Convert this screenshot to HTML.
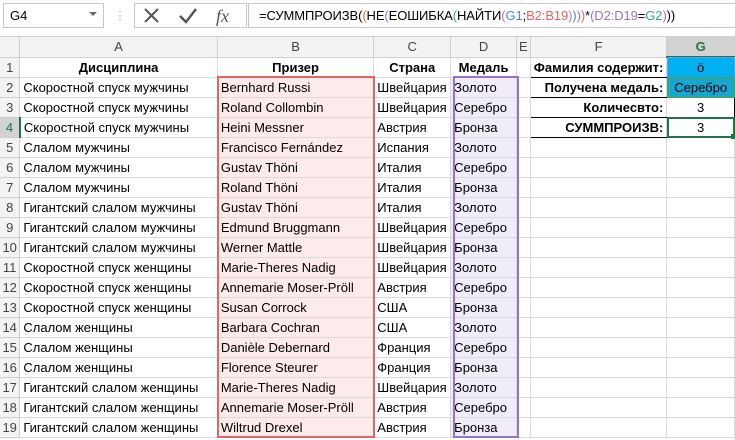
<!DOCTYPE html><html><head><meta charset="utf-8"><style>
body{margin:0;width:735px;height:440px;overflow:hidden;background:#fff;font-family:"Liberation Sans","DejaVu Sans",sans-serif;font-size:13px;color:#000;position:relative}
.a{position:absolute;box-sizing:border-box}
table{position:absolute;left:0;top:37px;border-collapse:collapse;table-layout:fixed}
td{height:20px;padding:0 0 0 3px;border-right:1px solid #d9d9d9;border-bottom:1px solid #d9d9d9;white-space:nowrap;overflow:hidden;box-sizing:border-box;line-height:19px}
tr.h td{background:#f3f3f3;color:#444;text-align:center;padding:0;border-color:#cfcfcf}
td.r{background:#f3f3f3;color:#444;text-align:center;padding:0;border-color:#cfcfcf}
.b{font-weight:bold}.c{text-align:center;padding:0}.rt{text-align:right;padding-right:3px}
.pk{background:#fdeaea}.pu{background:#f1edf8}
</style></head><body>
<div class="a" style="left:0;top:0;width:735px;height:37px;background:#fff;border-bottom:1px solid #d0d0d0"></div>
<div class="a" style="left:3px;top:3px;width:101px;height:25px;border:1px solid #c6c6c6;padding:4px 0 0 6px;font-size:13px">G4<span style="position:absolute;right:6px;top:8px;border-left:4px solid transparent;border-right:4px solid transparent;border-top:4px solid #666"></span></div>
<div class="a" style="left:118px;top:9px;color:#999;font-size:12px;line-height:4px">·<br>·<br>·</div>
<div class="a" style="left:134px;top:3px;width:113px;height:25px;border:1px solid #c6c6c6"></div>
<svg class="a" style="left:134px;top:3px" width="113" height="25"><path d="M11 6 L24 19 M24 6 L11 19" stroke="#555" stroke-width="2"/><path d="M46 13 L52 19 L62 6" stroke="#555" stroke-width="2.5" fill="none"/><text x="82" y="19" font-family="Liberation Serif" font-style="italic" font-size="18" fill="#555">fx</text></svg>
<div class="a" style="left:248px;top:3px;width:487px;height:25px;border:1px solid #c6c6c6;border-right:none;padding:4px 0 0 10px;font-size:13px;letter-spacing:-0.1px">=СУММПРОИЗВ(<span style="color:#e06666">(</span>НЕ<span style="color:#9673c8">(</span>ЕОШИБКА<span style="color:#3aa37a">(</span>НАЙТИ<span style="color:#c070c0">(</span><span style="color:#4a86e8">G1</span>;<span style="color:#e06666">B2:B19</span><span style="color:#c070c0">)</span><span style="color:#3aa37a">)</span><span style="color:#9673c8">)</span><span style="color:#e06666">)</span>*<span style="color:#9673c8">(</span><span style="color:#9673c8">D2:D19</span>=<span style="color:#3aa37a">G2</span><span style="color:#9673c8">)</span>))</div>
<table>
<colgroup><col style="width:20px"><col style="width:198px"><col style="width:157px"><col style="width:77px"><col style="width:66px"><col style="width:14px"><col style="width:135px"><col style="width:68px"></colgroup>
<tr class="h"><td></td><td>A</td><td>B</td><td>C</td><td>D</td><td>E</td><td>F</td><td style="background:#d2d2d2;color:#217346;font-weight:bold;border-bottom:2px solid #217346">G</td></tr>
<tr><td class="r">1</td><td class="b c">Дисциплина</td><td class="b c">Призер</td><td class="b c">Страна</td><td class="b c">Медаль</td><td></td><td class="b rt" style="border-top:1px solid #000;border-left:1px solid #000;border-bottom:1px solid #000">Фамилия содержит:</td><td class="c" style="background:#00b0f0;border:1px solid #000">ö</td></tr>
<tr><td class="r">2</td><td>Скоростной спуск мужчины</td><td class="pk">Bernhard Russi</td><td>Швейцария</td><td class="pu">Золото</td><td></td><td class="b rt" style="border-left:1px solid #000;border-bottom:1px solid #000">Получена медаль:</td><td class="c" style="background:#16a6d4;border:1px solid #000">Серебро</td></tr>
<tr><td class="r">3</td><td>Скоростной спуск мужчины</td><td class="pk">Roland Collombin</td><td>Швейцария</td><td class="pu">Серебро</td><td></td><td class="b rt" style="border-left:1px solid #000;border-bottom:1px solid #000">Количесвто:</td><td class="c" style="border:1px solid #000">3</td></tr>
<tr><td class="r" style="background:#d2d2d2;color:#217346;border-right:2px solid #217346">4</td><td>Скоростной спуск мужчины</td><td class="pk">Heini Messner</td><td>Австрия</td><td class="pu">Бронза</td><td></td><td class="b rt" style="border-bottom:1px solid #000">СУММПРОИЗВ:</td><td class="c" style="border:1px solid #000">3</td></tr>
<tr><td class="r">5</td><td>Слалом мужчины</td><td class="pk">Francisco Fernández</td><td>Испания</td><td class="pu">Золото</td><td></td><td></td><td></td></tr>
<tr><td class="r">6</td><td>Слалом мужчины</td><td class="pk">Gustav Thöni</td><td>Италия</td><td class="pu">Серебро</td><td></td><td></td><td></td></tr>
<tr><td class="r">7</td><td>Слалом мужчины</td><td class="pk">Roland Thöni</td><td>Италия</td><td class="pu">Бронза</td><td></td><td></td><td></td></tr>
<tr><td class="r">8</td><td>Гигантский слалом мужчины</td><td class="pk">Gustav Thöni</td><td>Италия</td><td class="pu">Золото</td><td></td><td></td><td></td></tr>
<tr><td class="r">9</td><td>Гигантский слалом мужчины</td><td class="pk">Edmund Bruggmann</td><td>Швейцария</td><td class="pu">Серебро</td><td></td><td></td><td></td></tr>
<tr><td class="r">10</td><td>Гигантский слалом мужчины</td><td class="pk">Werner Mattle</td><td>Швейцария</td><td class="pu">Бронза</td><td></td><td></td><td></td></tr>
<tr><td class="r">11</td><td>Скоростной спуск женщины</td><td class="pk">Marie-Theres Nadig</td><td>Швейцария</td><td class="pu">Золото</td><td></td><td></td><td></td></tr>
<tr><td class="r">12</td><td>Скоростной спуск женщины</td><td class="pk">Annemarie Moser-Pröll</td><td>Австрия</td><td class="pu">Серебро</td><td></td><td></td><td></td></tr>
<tr><td class="r">13</td><td>Скоростной спуск женщины</td><td class="pk">Susan Corrock</td><td>США</td><td class="pu">Бронза</td><td></td><td></td><td></td></tr>
<tr><td class="r">14</td><td>Слалом женщины</td><td class="pk">Barbara Cochran</td><td>США</td><td class="pu">Золото</td><td></td><td></td><td></td></tr>
<tr><td class="r">15</td><td>Слалом женщины</td><td class="pk">Danièle Debernard</td><td>Франция</td><td class="pu">Серебро</td><td></td><td></td><td></td></tr>
<tr><td class="r">16</td><td>Слалом женщины</td><td class="pk">Florence Steurer</td><td>Франция</td><td class="pu">Бронза</td><td></td><td></td><td></td></tr>
<tr><td class="r">17</td><td>Гигантский слалом женщины</td><td class="pk">Marie-Theres Nadig</td><td>Швейцария</td><td class="pu">Золото</td><td></td><td></td><td></td></tr>
<tr><td class="r">18</td><td>Гигантский слалом женщины</td><td class="pk">Annemarie Moser-Pröll</td><td>Австрия</td><td class="pu">Серебро</td><td></td><td></td><td></td></tr>
<tr><td class="r">19</td><td>Гигантский слалом женщины</td><td class="pk">Wiltrud Drexel</td><td>Австрия</td><td class="pu">Бронза</td><td></td><td></td><td></td></tr>
</table>
<div class="a" style="left:217px;top:76px;width:158px;height:362px;border:2px solid #e06666"></div>
<div class="a" style="left:453px;top:76px;width:66px;height:362px;border:2px solid #9673c8"></div>
<div class="a" style="left:667px;top:57px;width:68px;height:21px;border:1px solid #6d9eeb"></div>
<div class="a" style="left:667px;top:77px;width:68px;height:21px;border:2px solid #3aa37a"></div>
<div class="a" style="left:667px;top:117px;width:68px;height:21px;border:2px solid #217346"></div>
<div class="a" style="left:731px;top:134px;width:5px;height:5px;background:#217346"></div>
</body></html>
